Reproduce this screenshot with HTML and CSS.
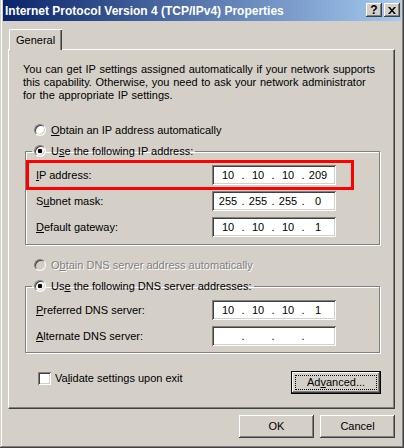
FILE: index.html
```html
<!DOCTYPE html>
<html lang="en">
<head>
  <meta charset="UTF-8">
  <title>Internet Protocol Version 4 (TCP/IPv4) Properties</title>
  <link rel="stylesheet" href="styles.css">
</head>
<body>
  <div class="window">
    <div class="titlebar">
      <span class="title">Internet Protocol Version 4 (TCP/IPv4) Properties</span>
      <span class="tbtn help">?</span>
      <span class="tbtn close">
        <svg width="8" height="7" viewBox="0 0 8 7"><path d="M0 0h2l2 2.5 2-2.5h2l-3 3.5 3 3.5h-2l-2-2.5-2 2.5h-2l3-3.5z" fill="#000"/></svg>
      </span>
    </div>

    <div class="client">
      <div class="tabs"><span class="tab">General</span></div>

      <div class="panel">
        <p class="intro">You can get IP settings assigned automatically if your network supports<br>this capability. Otherwise, you need to ask your network administrator<br>for the appropriate IP settings.</p>

        <label class="option first"><input type="radio" name="ip" class="radio"><span><u>O</u>btain an IP address automatically</span></label>

        <fieldset class="group">
          <legend><label class="option"><input type="radio" name="ip" class="radio" checked><span>U<u>s</u>e the following IP address:</span></label></legend>
          <div class="row marked">
            <span><u>I</u>P address:</span>
            <div class="ip"><span class="oct">10</span><span class="dot">.</span><span class="oct">10</span><span class="dot">.</span><span class="oct">10</span><span class="dot">.</span><span class="oct">209</span></div>
          </div>
          <div class="row">
            <span>S<u>u</u>bnet mask:</span>
            <div class="ip"><span class="oct">255</span><span class="dot">.</span><span class="oct">255</span><span class="dot">.</span><span class="oct">255</span><span class="dot">.</span><span class="oct">0</span></div>
          </div>
          <div class="row">
            <span><u>D</u>efault gateway:</span>
            <div class="ip"><span class="oct">10</span><span class="dot">.</span><span class="oct">10</span><span class="dot">.</span><span class="oct">10</span><span class="dot">.</span><span class="oct">1</span></div>
          </div>
        </fieldset>

        <label class="option disabled"><input type="radio" name="dns" class="radio" disabled><span>O<u>b</u>tain DNS server address automatically</span></label>

        <fieldset class="group dns">
          <legend><label class="option"><input type="radio" name="dns" class="radio" checked><span>Us<u>e</u> the following DNS server addresses:</span></label></legend>
          <div class="row">
            <span><u>P</u>referred DNS server:</span>
            <div class="ip"><span class="oct">10</span><span class="dot">.</span><span class="oct">10</span><span class="dot">.</span><span class="oct">10</span><span class="dot">.</span><span class="oct">1</span></div>
          </div>
          <div class="row">
            <span><u>A</u>lternate DNS server:</span>
            <div class="ip"><span class="oct"></span><span class="dot">.</span><span class="oct"></span><span class="dot">.</span><span class="oct"></span><span class="dot">.</span><span class="oct"></span></div>
          </div>
        </fieldset>

        <div class="bottom-row">
          <label class="check"><input type="checkbox" class="checkbox"><span>Va<u>l</u>idate settings upon exit</span></label>
          <button type="button" class="btn default">Ad<u>v</u>anced...</button>
        </div>
      </div>

      <div class="footer">
        <button type="button" class="btn">OK</button>
        <button type="button" class="btn">Cancel</button>
      </div>
    </div>
  </div>
</body>
</html>
```

FILE: styles.css
```css
html, body {
  margin: 0;
  padding: 0;
}
body {
  width: 404px;
  height: 448px;
  overflow: hidden;
  background: #d4d0c8;
  font-family: "Liberation Sans", Arial, sans-serif;
  font-size: 11px;
  line-height: 13px;
  color: #000;
}
u {
  text-decoration: underline;
  text-underline-offset: 1px;
}

/* window frame */
.window {
  box-sizing: border-box;
  width: 404px;
  height: 448px;
  padding: 0 3px 3px 3px;
  box-shadow: inset -1px -1px 0 #404040, inset 1px 0 0 #d4d0c8, inset -2px -2px 0 #808080, inset 2px 0 0 #fff;
}
.titlebar {
  display: flex;
  align-items: flex-start;
  height: 21px;
  padding-right: 1px;
  background: linear-gradient(to right, #0a246a, #a6caf0);
}
.title {
  flex: 1;
  padding: 4px 0 0 2px;
  color: #fff;
  font-weight: bold;
  font-size: 12px;
  line-height: 14px;
  white-space: nowrap;
}
.tbtn {
  display: flex;
  align-items: center;
  justify-content: center;
  box-sizing: border-box;
  width: 16px;
  height: 14px;
  margin-top: 3px;
  background: #d4d0c8;
  box-shadow: inset -1px -1px 0 #404040, inset 1px 1px 0 #fff, inset -2px -2px 0 #808080, inset 2px 2px 0 #d4d0c8;
  font-weight: bold;
  font-size: 12px;
}
.tbtn + .tbtn {
  margin-left: 2px;
}

/* tab + panel */
.client {
  padding: 0 6px 0 5px;
}
.tabs {
  display: flex;
  height: 20px;
  padding: 8px 0 0 1px;
}
.tab {
  position: relative;
  z-index: 1;
  box-sizing: border-box;
  width: 53px;
  height: 21px;
  padding: 4px 0 0 6px;
  background: #d4d0c8;
  border-top: 1px solid #fff;
  border-left: 1px solid #fff;
  border-top-left-radius: 2px;
  box-shadow: inset -1px 0 0 #404040, inset -2px 0 0 #808080;
}
.panel {
  box-sizing: border-box;
  height: 360px;
  border-top: 1px solid #fff;
  border-left: 1px solid #fff;
  border-right: 1px solid #404040;
  border-bottom: 1px solid #404040;
  box-shadow: inset -1px -1px 0 #808080;
}
.intro {
  margin: 13px 0 0 14px;
  word-spacing: 0.6px;
}

/* radio options */
.option {
  display: flex;
  align-items: center;
  height: 16px;
  margin-left: 25px;
}
.option.first {
  margin-top: 20px;
}
.option.disabled {
  margin-top: 12px;
  color: #808080;
  text-shadow: 1px 1px 0 #fff;
}
legend .option {
  margin-left: 0;
}
.radio {
  appearance: none;
  box-sizing: border-box;
  width: 12px;
  height: 12px;
  margin: 0 5px 0 0;
  border-radius: 50%;
  border: 1px solid;
  border-color: #808080 #fff #fff #808080;
  background: #fff;
  box-shadow: inset 1px 1px 0 #404040, inset -1px -1px 0 #d4d0c8;
}
.radio:checked {
  background: radial-gradient(circle, #000 0 2px, #fff 2.6px);
}
.radio:disabled {
  background: #d4d0c8;
}

/* group boxes */
.group {
  box-sizing: border-box;
  width: 355px;
  min-width: 0;
  margin: 5px 0 0 16px;
  padding: 3px 0 4px 0;
  border: 1px solid #808080;
  box-shadow: 1px 1px 0 #fff, inset 1px 1px 0 #fff;
}
.group.dns {
  padding-bottom: 3px;
}
.group legend {
  margin-left: 6px;
  padding: 0 2px;
}
.row {
  display: flex;
  align-items: center;
  justify-content: space-between;
  box-sizing: border-box;
  width: 324px;
  height: 26px;
  margin-left: 2px;
  padding: 0 16px 0 8px;
}
.row.marked {
  outline: 3px solid #f00;
  outline-offset: -1px;
}
.ip {
  display: flex;
  align-items: center;
  box-sizing: border-box;
  width: 124px;
  height: 20px;
  padding: 1px 2px 0;
  background: #fff;
  box-shadow: inset 1px 1px 0 #808080, inset -1px -1px 0 #fff, inset 2px 2px 0 #404040, inset -2px -2px 0 #d4d0c8;
}
.oct {
  width: 28px;
  text-align: center;
}
.dot {
  width: 2px;
  display: flex;
  justify-content: center;
}

/* checkbox + buttons */
.bottom-row {
  display: flex;
  align-items: flex-start;
  margin: 18px 13px 0 29px;
}
.check {
  display: flex;
  align-items: center;
  height: 15px;
}
.checkbox {
  appearance: none;
  box-sizing: border-box;
  width: 13px;
  height: 13px;
  margin: 0 4px 0 0;
  background: #fff;
  box-shadow: inset 1px 1px 0 #808080, inset -1px -1px 0 #fff, inset 2px 2px 0 #404040, inset -2px -2px 0 #d4d0c8;
}
.btn {
  box-sizing: border-box;
  width: 75px;
  height: 23px;
  padding: 0;
  border: none;
  background: #d4d0c8;
  font: inherit;
  color: #000;
  box-shadow: inset -1px -1px 0 #404040, inset 1px 1px 0 #fff, inset -2px -2px 0 #808080, inset 2px 2px 0 #d4d0c8;
}
.btn.default {
  width: 90px;
  margin-left: auto;
  border: 1px solid #000;
  outline: 1px dotted #000;
  outline-offset: -5px;
}
.footer {
  display: flex;
  justify-content: flex-end;
  gap: 6px;
  margin-top: 6px;
}
```
